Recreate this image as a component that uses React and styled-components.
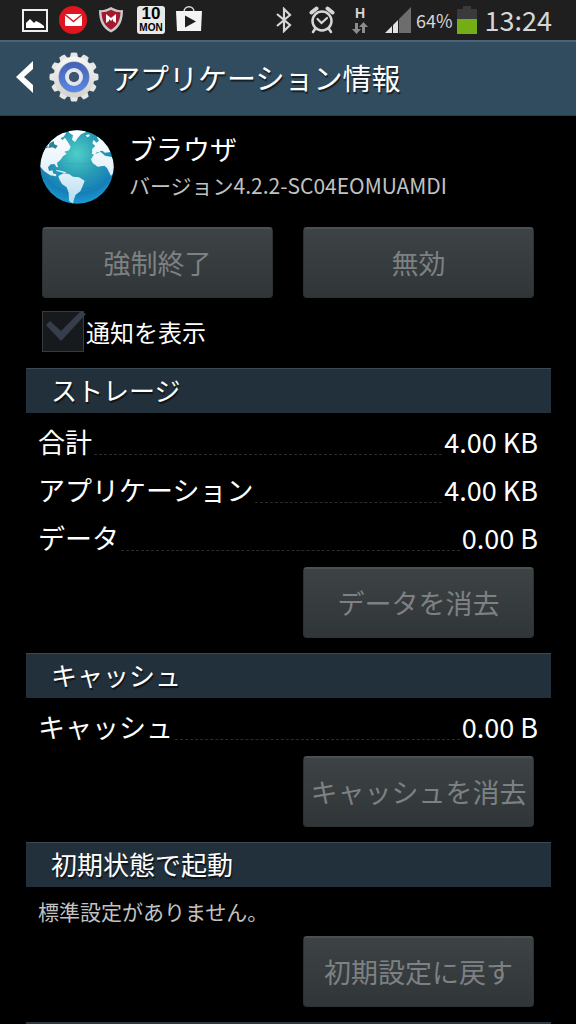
import React, { useState } from 'react';
import styled, { createGlobalStyle } from 'styled-components';

const storageRows = [
  { id: 'total', label: '合計', value: '4.00 KB' },
  { id: 'app', label: 'アプリケーション', value: '4.00 KB' },
  { id: 'data', label: 'データ', value: '0.00 B' },
];

const cacheRows = [{ id: 'cache', label: 'キャッシュ', value: '0.00 B' }];

const gearTeeth = Array.from({ length: 12 }, (_, idx) => idx * 30);

const PictureIcon = () => (
  <svg width="28" height="28" viewBox="0 0 28 28" aria-hidden="true">
    <rect x="3" y="4" width="24" height="21" fill="none" stroke="#eee" strokeWidth="2" />
    <path d="M6 22v-5l4-4 4 4 2-2 4 2 4 3v2z" fill="#fff" />
  </svg>
);

const MailIcon = () => (
  <svg width="28" height="28" viewBox="0 0 28 28" aria-hidden="true">
    <circle cx="14" cy="14" r="14" fill="#df1620" />
    <rect x="6" y="8" width="17" height="12" rx="1" fill="#fff" />
    <path d="M6 8.5l8.500 7 8.500-7" fill="none" stroke="#df1620" strokeWidth="1.500" />
  </svg>
);

const ShieldIcon = () => (
  <svg width="28" height="28" viewBox="0 0 28 28" aria-hidden="true">
    <path d="M1 4c4 .5 8-.5 12-3 4 2.500 8 3.500 12 3 0 11-3 18-12 22.500C4 22 1 15 1 4z" fill="#c9c9c9" />
    <path d="M3.500 6.200c3.500 0 6.500-.8 9.500-2.500 3 1.700 6 2.500 9.500 2.500-.3 8-3 13.800-9.500 17.500C6.500 20 3.800 14.200 3.500 6.200z" fill="#a31a2e" />
    <path d="M8 17V8l5 4 5-4v9l-3-2v-2l-2 2-2-2v2z" fill="#fff" />
  </svg>
);

const BagIcon = () => (
  <svg width="28" height="28" viewBox="0 0 28 28" aria-hidden="true">
    <path d="M8 6c0-7 10-7 10 0" fill="none" stroke="#ddd" strokeWidth="1.500" />
    <path d="M0 5h26l-1 20H1z" fill="#f4f4f4" />
    <path d="M9 9.500l11 6-11 6z" fill="#1f1f1f" />
  </svg>
);

const BluetoothIcon = () => (
  <svg width="16" height="26" viewBox="0 0 16 26" aria-hidden="true">
    <path d="M1 7l13 11-6 6V2l6 6L1 19" fill="none" stroke="#d6d6d6" strokeWidth="2.200" />
  </svg>
);

const AlarmIcon = () => (
  <svg width="26" height="28" viewBox="0 0 26 28" aria-hidden="true">
    <g fill="none" stroke="#d6d6d6" strokeLinecap="round">
      <circle cx="13" cy="15" r="9.500" strokeWidth="2.500" />
      <path d="M2.500 6.500l5-4M23.500 6.500l-5-4" strokeWidth="4" />
      <path d="M6 23l-2 3M20 23l2 3" strokeWidth="2.500" />
      <path d="M8.500 13l4 4 5.500-5" strokeWidth="2.200" />
    </g>
  </svg>
);

const DataArrowsIcon = () => (
  <svg width="16" height="12" viewBox="0 0 16 12" aria-hidden="true">
    <path d="M3 1h3v6h3l-4.500 5L0 7h3z" fill="#8c8c8c" />
    <path d="M10 11h3V5h3l-4.500-5L7 5h3z" fill="#8c8c8c" />
  </svg>
);

const SignalIcon = () => (
  <svg width="26" height="26" viewBox="0 0 26 26" aria-hidden="true">
    <path d="M0 26l7-7v7zM8 18l5-5v13H8z" fill="#e2e2e2" />
    <path d="M14 12L26 0v26H14z" fill="#6d6d6d" />
  </svg>
);

const BatteryIcon = () => (
  <svg width="20" height="28" viewBox="0 0 20 28" aria-hidden="true">
    <path d="M6 0h8v3h6v25H0V3h6z" fill="#3a3a3a" />
    <rect y="13" width="20" height="15" fill="#74ad16" />
  </svg>
);

const BackIcon = () => (
  <svg width="18" height="32" viewBox="0 0 18 32" aria-hidden="true">
    <path d="M17 0v8l-9 8 9 8v8L0 16z" fill="#fff" />
  </svg>
);

const GearIcon = () => (
  <svg width="50" height="50" viewBox="0 0 50 50" aria-hidden="true">
    <defs>
      <linearGradient id="gearBody" x1="0" y1="0" x2="0" y2="1">
        <stop offset="0" stopColor="#f7f7f7" />
        <stop offset="1" stopColor="#d2d2d0" />
      </linearGradient>
      <linearGradient id="gearRing" x1="0" y1="0" x2="0" y2="1">
        <stop offset="0" stopColor="#4561b4" />
        <stop offset="1" stopColor="#5a88e4" />
      </linearGradient>
    </defs>
    {gearTeeth.map((angle) => (
      <path
        key={angle}
        d="M20.500 7l1.500-6.200q3-.8 6 0L29.500 7z"
        fill="#e6e6e5"
        transform={`rotate(${angle} 25 25)`}
      />
    ))}
    <circle cx="25" cy="25" r="20.500" fill="url(#gearBody)" />
    <circle cx="25" cy="25" r="15.500" fill="#8d98ae" />
    <circle cx="25" cy="25" r="15" fill="url(#gearRing)" />
    <circle cx="25" cy="25" r="7" fill="none" stroke="#e4e5e8" strokeWidth="4" />
    <circle cx="25" cy="25" r="5" fill="#3d5470" />
  </svg>
);

const GlobeIcon = () => (
  <svg width="74" height="74" viewBox="13 12 222 222" aria-hidden="true">
    <defs>
      <radialGradient id="sea" cx="0.5" cy="0.32" r="0.68">
        <stop offset="0" stopColor="#4ecfca" />
        <stop offset="0.45" stopColor="#2a9db4" />
        <stop offset="0.8" stopColor="#1580b8" />
        <stop offset="1" stopColor="#1c9ad2" />
      </radialGradient>
      <linearGradient id="land" x1="0" y1="12" x2="0" y2="234" gradientUnits="userSpaceOnUse">
        <stop offset="0" stopColor="#ffffff" />
        <stop offset="0.55" stopColor="#e4f1fa" />
        <stop offset="1" stopColor="#b4dcf0" />
      </linearGradient>
      <clipPath id="globeClip">
        <circle cx="124" cy="123" r="110" />
      </clipPath>
    </defs>
    <g clipPath="url(#globeClip)">
      <rect x="13" y="12" width="222" height="222" fill="url(#sea)" />
      <g fill="url(#land)">
        <path d="M10 118L18 80 42 42 62 26l18-6 12 0-8 12-9 4 5 7 8-8 8 12 9 15-5 11-14 4 7 6-11 8-8 11-10 9 3 13-5-1-5-9-12 1-8 9 3 11 11-2 1 9 10 3-1 6-17-3-18-12z" />
        <path d="M98 12l40 0 14 5-16 8-10 11-8 12-9-7 3-13-12-8z" />
        <path d="M150 28l10-3 3 5-8 4z" />
        <path d="M170 68l9-8-9-8 4-11 8 9 8-6-6-10 8-6 20 20 14 30-18 2-8-6-8 2 4 6-12-4-7 8-8-2z" />
        <path d="M176 84l20-5 12 10 20 4 8 17v26l-10 14-12-24-8-7-20 3-15-11-5-11z" />
        <path d="M68 150l16-8 16 2 12 8 18 2 17 10-5 14-8 18-14 10-5 14-3 14-12-10-1-24-6-16-14-10-8-14z" />
        <path d="M62 132l14 2 16 5-4 3-14-4-12-3z" />
      </g>
      <path d="M42 52l12-7 2 10 10 4-6 9-10-4-12 2z" fill="#2c8196" />
      <path d="M30 62l5-3 2 5-8 4z" fill="#2c8196" />
      <g stroke="#0f6f9f" strokeOpacity="0.2" strokeWidth="2" fill="none">
        <path d="M30 176q50 16 60 16M132 204q50-10 84-34M140 190q50-8 84-34M90 112q40 4 80 0M20 156q20 10 50 12" />
      </g>
    </g>
  </svg>
);

const CheckMark = () => (
  <Tick width="44" height="34" viewBox="0 0 44 34" aria-hidden="true">
    <path d="M3 14l4-4 11 10L38 0l5 3-25 27z" fill="#353e4a" />
  </Tick>
);

const SizeList = ({ rows }) => (
  <List>
    {rows.map((row) => (
      <Row key={row.id}>
        <Label>{row.label}</Label>
        <Value>{row.value}</Value>
      </Row>
    ))}
  </List>
);

const App = () => {
  const [notify, setNotify] = useState(true);

  return (
    <Screen>
      <GlobalStyle />
      <StatusBar>
        <Notifications>
          <PictureIcon />
          <MailIcon />
          <ShieldIcon />
          <DateBadge>
            <DateDay>10</DateDay>
            <DateWeek>MON</DateWeek>
          </DateBadge>
          <BagIcon />
        </Notifications>
        <SystemIcons>
          <BluetoothIcon />
          <AlarmIcon />
          <Network>
            H
            <DataArrowsIcon />
          </Network>
          <SignalIcon />
          <Battery>
            64%
            <BatteryIcon />
          </Battery>
        </SystemIcons>
        <Clock>13:24</Clock>
      </StatusBar>

      <Header>
        <BackButton type="button" aria-label="戻る">
          <BackIcon />
        </BackButton>
        <GearIcon />
        <HeaderTitle>アプリケーション情報</HeaderTitle>
      </Header>

      <Content>
        <AppInfo>
          <GlobeIcon />
          <div>
            <AppName>ブラウザ</AppName>
            <AppVersion>バージョン4.2.2-SC04EOMUAMDI</AppVersion>
          </div>
        </AppInfo>

        <ButtonGrid>
          <ActionButton disabled>強制終了</ActionButton>
          <ActionButton disabled>無効</ActionButton>
        </ButtonGrid>

        <CheckLabel>
          <CheckBox
            type="checkbox"
            checked={notify}
            disabled
            onChange={(e) => setNotify(e.target.checked)}
          />
          {notify && <CheckMark />}
          通知を表示
        </CheckLabel>

        <SectionTitle>ストレージ</SectionTitle>
        <SizeList rows={storageRows} />
        <ButtonGrid>
          <ActionButton $right disabled>データを消去</ActionButton>
        </ButtonGrid>

        <SectionTitle>キャッシュ</SectionTitle>
        <SizeList rows={cacheRows} />
        <ButtonGrid>
          <ActionButton $right disabled>キャッシュを消去</ActionButton>
        </ButtonGrid>

        <SectionTitle>初期状態で起動</SectionTitle>
        <Note>標準設定がありません。</Note>
        <ButtonGrid>
          <ActionButton $right disabled>初期設定に戻す</ActionButton>
        </ButtonGrid>
        <SectionEdge />
      </Content>
    </Screen>
  );
};

export default App;

const GlobalStyle = createGlobalStyle`
  * {
    box-sizing: border-box;
  }

  body {
    margin: 0;
    background-color: #000;
    font-family: "Noto Sans CJK JP", "Noto Sans", sans-serif;
    color: #fff;
  }

  svg {
    display: block;
    flex-shrink: 0;
  }
`;

const Screen = styled.div`
  display: flex;
  flex-direction: column;
  min-height: 100vh;
  background-color: #000;
`;

const StatusBar = styled.div`
  display: flex;
  align-items: center;
  height: 40px;
  padding: 0 24px 0 20px;
  background-color: #1f1f1f;
  color: #d6d6d6;
`;

const Notifications = styled.div`
  display: flex;
  align-items: center;
  gap: 11px;
`;

const DateBadge = styled.div`
  display: flex;
  flex-direction: column;
  align-items: center;
  width: 28px;
  height: 28px;
  border-radius: 3px;
  background-color: #e8e8e8;
  color: #000;
  font-family: "Liberation Sans", sans-serif;
  font-weight: 700;
`;

const DateDay = styled.span`
  font-size: 17px;
  line-height: 16px;
`;

const DateWeek = styled.span`
  font-size: 10px;
  line-height: 12px;
`;

const SystemIcons = styled.div`
  display: flex;
  align-items: center;
  gap: 17px;
  margin-left: auto;
`;

const Network = styled.div`
  display: flex;
  flex-direction: column;
  align-items: center;
  gap: 2px;
  font-family: "Liberation Sans", sans-serif;
  font-size: 14px;
  line-height: 14px;
  font-weight: 700;
`;

const Battery = styled.div`
  display: flex;
  align-items: center;
  gap: 4px;
  margin-left: -12px;
  font-size: 18px;
  line-height: 28px;
`;

const Clock = styled.time`
  margin-left: 8px;
  font-size: 27px;
  line-height: 40px;
`;

const Header = styled.header`
  display: flex;
  align-items: center;
  height: 76px;
  padding: 0 0 3px 16px;
  border-top: 2px solid #4b6475;
  border-bottom: 1px solid #263c4b;
  background-color: #314c5f;
`;

const BackButton = styled.button`
  margin: 0 15px 0 0;
  padding: 0;
  border: none;
  background: none;
  cursor: pointer;
`;

const HeaderTitle = styled.h1`
  margin: 0 0 0 12px;
  font-size: 29px;
  line-height: 40px;
  font-weight: 400;
  text-shadow: 1px 2px 1px rgba(0, 0, 0, 0.6);
`;

const Content = styled.main`
  display: flex;
  flex-direction: column;
  padding: 14px 25px 0 26px;
`;

const AppInfo = styled.section`
  display: flex;
  align-items: center;
  gap: 15px;
  margin-bottom: 23px;
  padding-left: 14px;
`;

const AppName = styled.h2`
  margin: 0;
  font-size: 27px;
  line-height: 36px;
  font-weight: 400;
`;

const AppVersion = styled.p`
  margin: 0;
  font-size: 21px;
  line-height: 36px;
  color: #c2c2c2;
`;

const ButtonGrid = styled.div`
  display: grid;
  grid-template-columns: 1fr 1fr;
  gap: 30px;
  padding: 0 17px 0 16px;
`;

const ActionButton = styled.button`
  grid-column: ${(props) => (props.$right ? 2 : 'auto')};
  height: 71px;
  padding: 0;
  border: 1px solid #2c3133;
  border-top: 2px solid #4a5053;
  border-radius: 4px;
  background: linear-gradient(#3d4245, #303537);
  color: #7d8183;
  font-family: inherit;
  font-size: 27px;
  line-height: 40px;
  white-space: nowrap;
`;

const CheckLabel = styled.label`
  position: relative;
  display: flex;
  align-items: center;
  gap: 2px;
  margin: 13px 16px 16px;
  font-size: 24px;
  line-height: 36px;
`;

const CheckBox = styled.input`
  appearance: none;
  width: 42px;
  height: 41px;
  margin: 0;
  border: 1px solid #3a3a3a;
  background-color: #171a1c;
`;

const Tick = styled.svg`
  position: absolute;
  top: 0;
  left: 1px;
`;

const SectionTitle = styled.h3`
  margin: 0 0 6px;
  padding: 0 0 2px 25px;
  border-top: 1px solid #3a4a54;
  background-color: #21303a;
  font-size: 26px;
  line-height: 42px;
  font-weight: 400;
  text-shadow: 1px 2px 1px rgba(0, 0, 0, 0.6);

  ${ButtonGrid} + & {
    margin-top: 15px;
  }
`;

const List = styled.dl`
  margin: 0 0 4px;
  padding: 0 13px 0 12px;
`;

const Row = styled.div`
  display: flex;
  font-size: 27px;
  line-height: 46px;
  padding-bottom: 2px;
`;

const Label = styled.dt`
  display: flex;
  flex: 1;

  &::after {
    content: "";
    flex: 1;
    margin: 0 2px 10px;
    border-bottom: 1px dashed #2b2b2b;
  }
`;

const Value = styled.dd`
  margin: 0;
`;

const Note = styled.p`
  margin: 0 0 7px;
  padding-left: 12px;
  font-size: 21px;
  line-height: 36px;
  color: #c2c2c2;
`;

const SectionEdge = styled.div`
  height: 2px;
  margin-top: 15px;
  background-color: #2a3943;
`;
